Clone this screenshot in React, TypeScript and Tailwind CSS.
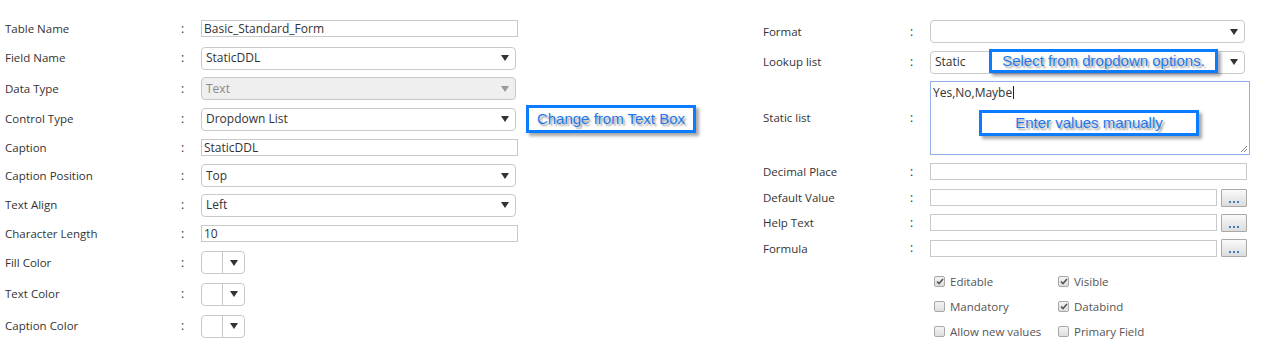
import React from "react";

const font = { fontFamily: '"Open Sans", "Noto Sans", sans-serif' };

function Arrow({ muted }: { muted?: boolean }) {
  return (
    <svg width="8" height="6" viewBox="0 0 8 6" className="shrink-0">
      <path d="M0 0 L8 0 L4 6 Z" fill={muted ? "#9a9a9a" : "#333"} />
    </svg>
  );
}

function Label({ text, w }: { text: string; w: string }) {
  return (
    <>
      <div className={`${w} shrink-0 text-[11.5px] text-[#333]`}>{text}</div>
      <div className="w-[20px] shrink-0 text-[12px] text-[#333]">:</div>
    </>
  );
}

function TextBox({ value, w }: { value?: string; w: string }) {
  return (
    <div className={`${w} h-[17px] border border-[#c9c9c9] bg-white px-[2px] text-[12px] leading-[15px] text-[#333]`}>
      {value}
    </div>
  );
}

function Select({ value, w, disabled }: { value?: string; w: string; disabled?: boolean }) {
  return (
    <div
      className={[
        w,
        "flex h-[23px] items-center justify-between rounded-[4px] border border-[#c9c9c9] pl-[4px] pr-[6px] text-[12px]",
        disabled ? "bg-[#efefef] text-[#8a8a8a]" : "bg-white text-[#333]",
      ].join(" ")}
    >
      <span>{value}</span>
      <Arrow muted={disabled} />
    </div>
  );
}

function ColorPick() {
  return (
    <div className="flex h-[23px] w-[44px] items-center rounded-[4px] border border-[#c9c9c9] bg-white">
      <div className="h-full w-[21px] border-r border-[#c9c9c9]" />
      <div className="flex flex-1 justify-center">
        <Arrow />
      </div>
    </div>
  );
}

function DotsBtn() {
  return (
    <div className="ml-[4px] flex h-[18px] w-[26px] items-end justify-center rounded-[1px] border border-[#a9a9a9] bg-gradient-to-b from-[#fafafa] to-[#dcdcdc] pb-[3px]">
      <span className="flex gap-[2px]">
        <i className="block h-[2px] w-[2px] bg-[#3b7fc4]" />
        <i className="block h-[2px] w-[2px] bg-[#3b7fc4]" />
        <i className="block h-[2px] w-[2px] bg-[#3b7fc4]" />
      </span>
    </div>
  );
}

function Callout({ text, className }: { text: string; className?: string }) {
  return (
    <div
      className={`flex items-center justify-center border-[3px] border-[#0b7bff] bg-white shadow-[3px_3px_3px_rgba(0,0,0,0.35)] ${className ?? ""}`}
    >
      <span
        className="whitespace-nowrap text-[15px] text-[#1f78ea] [text-shadow:2px_2px_2px_#9a9a9a]"
        style={{ fontFamily: '"Liberation Sans", Arial, sans-serif' }}
      >
        {text}
      </span>
    </div>
  );
}

function Check({ label, checked }: { label: string; checked?: boolean }) {
  return (
    <div className="flex items-center">
      <div className="flex h-[11px] w-[11px] items-center justify-center rounded-[2px] border border-[#a8a8a8] bg-gradient-to-b from-[#f4f4f4] to-[#dedede]">
        {checked && (
          <svg width="8" height="7" viewBox="0 0 8 7">
            <path d="M1 3.5 L3 5.5 L7 1" stroke="#555" strokeWidth="1.6" fill="none" />
          </svg>
        )}
      </div>
      <span className="ml-[5px] whitespace-nowrap text-[11.5px] text-[#555]">{label}</span>
    </div>
  );
}

export default function App() {
  const lw = "w-[176px]";
  const rw = "w-[147px]";
  return (
    <div className="flex h-[344px] w-[1280px] bg-white" style={font}>
      {/* left column */}
      <div className="flex w-[760px] shrink-0 flex-col pl-[5px] pt-[14px]">
        <div className="flex h-[29px] items-center">
          <Label text="Table Name" w={lw} />
          <TextBox value="Basic_Standard_Form" w="w-[317px]" />
        </div>
        <div className="flex h-[30px] items-center">
          <Label text="Field Name" w={lw} />
          <Select value="StaticDDL" w="w-[315px]" />
        </div>
        <div className="flex h-[31px] items-center">
          <Label text="Data Type" w={lw} />
          <Select value="Text" w="w-[315px]" disabled />
        </div>
        <div className="flex h-[30px] items-center">
          <Label text="Control Type" w={lw} />
          <Select value="Dropdown List" w="w-[315px]" />
          <Callout text="Change from Text Box" className="ml-[10px] h-[28px] w-[170px]" />
        </div>
        <div className="flex h-[27px] items-center">
          <Label text="Caption" w={lw} />
          <TextBox value="StaticDDL" w="w-[317px]" />
        </div>
        <div className="flex h-[29px] items-center">
          <Label text="Caption Position" w={lw} />
          <Select value="Top" w="w-[315px]" />
        </div>
        <div className="flex h-[30px] items-center">
          <Label text="Text Align" w={lw} />
          <Select value="Left" w="w-[315px]" />
        </div>
        <div className="flex h-[27px] items-center">
          <Label text="Character Length" w={lw} />
          <TextBox value="10" w="w-[317px]" />
        </div>
        <div className="flex h-[31px] items-center">
          <Label text="Fill Color" w={lw} />
          <ColorPick />
        </div>
        <div className="flex h-[32px] items-center">
          <Label text="Text Color" w={lw} />
          <ColorPick />
        </div>
        <div className="flex h-[32px] items-center">
          <Label text="Caption Color" w={lw} />
          <ColorPick />
        </div>
      </div>

      {/* right column */}
      <div className="flex flex-1 flex-col pl-[3px] pt-[17px]">
        <div className="flex h-[30px] items-center">
          <Label text="Format" w={rw} />
          <Select w="w-[315px]" />
        </div>
        <div className="relative flex h-[32px] items-center">
          <Label text="Lookup list" w={rw} />
          <Select value="Static" w="w-[315px]" />
          <Callout text="Select from dropdown options." className="absolute left-[226px] top-[3px] h-[24px] w-[229px]" />
        </div>
        <div className="flex h-[82px] items-center">
          <Label text="Static list" w={rw} />
          <div className="relative h-[74px] w-[320px] border border-[#8fb0e8] bg-white px-[2px] pt-[2px] text-[12px] text-[#333]">
            <span>Yes,No,Maybe</span>
            <span className="ml-[1px] inline-block h-[13px] w-px translate-y-[2px] bg-[#222]" />
            <Callout text="Enter values manually" className="absolute left-[48px] top-[28px] h-[26px] w-[220px]" />
            <svg width="8" height="8" viewBox="0 0 8 8" className="absolute bottom-[1px] right-[1px]">
              <path d="M7 1 L1 7 M7 4 L4 7" stroke="#888" strokeWidth="1" />
            </svg>
          </div>
        </div>
        <div className="flex h-[28px] items-center">
          <Label text="Decimal Place" w={rw} />
          <TextBox w="w-[317px]" />
        </div>
        <div className="flex h-[25px] items-center">
          <Label text="Default Value" w={rw} />
          <TextBox w="w-[287px]" />
          <DotsBtn />
        </div>
        <div className="flex h-[26px] items-center">
          <Label text="Help Text" w={rw} />
          <TextBox w="w-[287px]" />
          <DotsBtn />
        </div>
        <div className="flex h-[26px] items-center">
          <Label text="Formula" w={rw} />
          <TextBox w="w-[287px]" />
          <DotsBtn />
        </div>
        <div className="mt-[8px] grid w-[320px] grid-cols-[124px_1fr] pl-[171px] [&>*]:h-[25px]">
          <Check label="Editable" checked />
          <Check label="Visible" checked />
          <Check label="Mandatory" />
          <Check label="Databind" checked />
          <Check label="Allow new values" />
          <Check label="Primary Field" />
        </div>
      </div>
    </div>
  );
}
